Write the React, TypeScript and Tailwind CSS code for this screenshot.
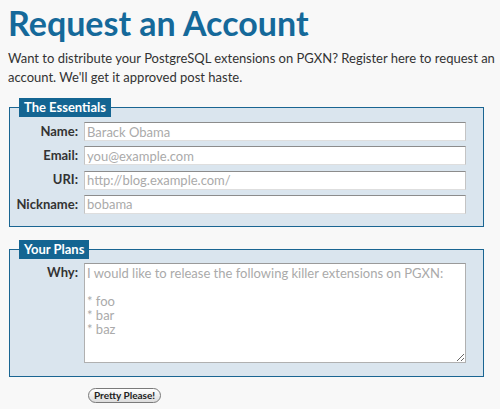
import React from "react";

const inputCls =
  "h-[19px] w-full bg-white border border-t-[#8c8c8c] border-x-[#c4c4c4] border-b-[#dedede] px-[2px] text-[13px] leading-[17px] text-[#333] placeholder:text-[#aaa] outline-none";

function Row({ label, placeholder }: { label: string; placeholder: string }) {
  return (
    <>
      <label className="flex justify-end items-center h-[19px] whitespace-nowrap font-bold text-[13px] text-[#333]">
        {label}
      </label>
      <input className={inputCls} placeholder={placeholder} />
    </>
  );
}

export default function App() {
  return (
    <div
      className="min-h-[409px] bg-[#f8f8f8] px-[8px] pt-[1px] text-[#333]"
      style={{ fontFamily: 'Lato, "Liberation Sans", sans-serif' }}
    >
      <h1 className="text-[34px] leading-[44px] font-bold text-[#15699a]">
        Request an Account
      </h1>
      <p className="mt-[4px] text-[13px] leading-[19px] text-[#333] w-[490px]">
        Want to distribute your PostgreSQL extensions on PGXN? Register here to request an
        account. We'll get it approved post haste.
      </p>

      <fieldset className="mt-[11px] ml-[1px] w-[475px] border border-[#1a6592] bg-[#dae5ee] pl-[9px] pr-[17px] pt-[5px] pb-[12px]">
        <legend className="h-[19px] bg-[#146592] px-[5px] text-[13px] leading-[19px] font-bold text-white">
          The Essentials
        </legend>
        <div className="grid grid-cols-[59px_1fr] gap-x-[6px] gap-y-[5.3px]">
          <Row label="Name:" placeholder="Barack Obama" />
          <Row label="Email:" placeholder="you@example.com" />
          <Row label="URI:" placeholder="http://blog.example.com/" />
          <Row label="Nickname:" placeholder="bobama" />
        </div>
      </fieldset>

      <fieldset className="mt-[13px] ml-[1px] w-[475px] border border-[#1a6592] bg-[#dae5ee] pl-[9px] pr-[17px] pt-[4px] pb-[13px]">
        <legend className="h-[19px] bg-[#146592] px-[5px] text-[13px] leading-[19px] font-bold text-white">
          Your Plans
        </legend>
        <div className="grid grid-cols-[59px_1fr] gap-x-[6px]">
          <label className="flex justify-end pt-[1px] whitespace-nowrap font-bold text-[13px] leading-[17px] text-[#333]">
            Why:
          </label>
          <textarea
            className="h-[100px] w-full bg-white border border-[#b0b0b0] border-t-[#9a9a9a] px-[2px] pt-[2px] text-[13px] leading-[14px] text-[#333] placeholder:text-[#aaa] outline-none resize-y"
            placeholder={"I would like to release the following killer extensions on PGXN:\n\n* foo\n* bar\n* baz"}
          />
        </div>
      </fieldset>

      <div className="flex pl-[80px] pt-[11px]">
        <button className="h-[15px] px-[5px] rounded-full border border-[#7a7a7a] bg-gradient-to-b from-white to-[#dcdcdc] text-[10px] leading-[12px] font-bold text-[#222]">
          Pretty Please!
        </button>
      </div>
    </div>
  );
}
